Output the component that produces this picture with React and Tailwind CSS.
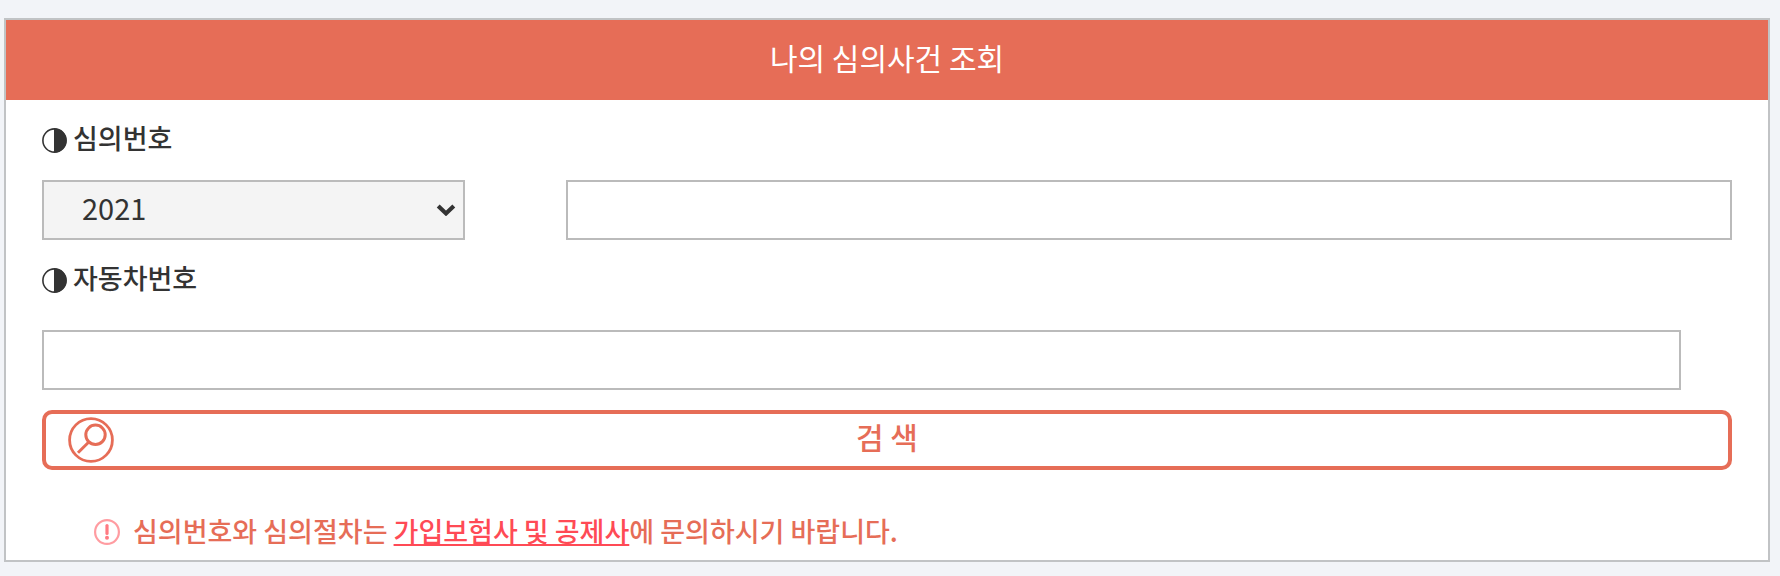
import { useState } from "react";

function HalfCircle() {
  return (
    <svg className="size-[25px] shrink-0" viewBox="0 0 25 25" aria-hidden="true">
      <circle cx="12.5" cy="12.5" r="11.6" fill="none" stroke="#333" strokeWidth="1.6" />
      <path d="M12 .5h.5a12 12 0 0 1 0 24H12z" fill="#333" />
    </svg>
  );
}

function SearchIcon() {
  return (
    <svg className="size-[46px] shrink-0" viewBox="0 0 46 46" fill="none" stroke="#e66d57" aria-hidden="true">
      <circle cx="23" cy="23" r="21.4" strokeWidth="2.8" />
      <circle cx="27.5" cy="17.8" r="9.7" strokeWidth="3" />
      <path d="M20.8 25 10 35.7" strokeWidth="3" />
    </svg>
  );
}

function AlertIcon() {
  return (
    <svg className="size-[26px] shrink-0" viewBox="0 0 26 26" fill="none" aria-hidden="true">
      <circle cx="13" cy="13" r="11.9" stroke="#ff9ca1" strokeWidth="2.2" />
      <path d="M13 6.5v8" stroke="#ff7a82" strokeWidth="3.2" strokeLinecap="round" />
      <circle cx="13" cy="18.8" r="2" fill="#ff7a82" />
    </svg>
  );
}

function FieldLabel({ htmlFor, children }) {
  return (
    <label htmlFor={htmlFor} className="flex h-10 items-center gap-[6px] text-[27px] leading-9 font-medium">
      <HalfCircle />
      <span className="pb-1">{children}</span>
    </label>
  );
}

export default function App() {
  const [year, setYear] = useState("2021");
  return (
    <div className="min-h-screen bg-[#f2f4f8] pt-[18px] pr-[10px] pb-3 pl-1 font-['Noto_Sans_CJK_KR',sans-serif] text-[#333]">
      <form className="border-2 border-[#c1c3c5] bg-white" onSubmit={(e) => e.preventDefault()}>
        <h1 className="flex h-20 items-center justify-center bg-[#e66d57] pb-1.5 text-[30px] leading-10 font-normal text-white">
          나의 심의사건 조회
        </h1>
        <div className="px-9 pt-5 pb-2">
          <FieldLabel htmlFor="case-number">심의번호</FieldLabel>
          <div className="mt-5 flex justify-between">
            <div className="relative h-[60px] w-1/4">
              <select
                aria-label="연도"
                value={year}
                onChange={(e) => setYear(e.target.value)}
                className="block h-[60px] w-full appearance-none rounded-none border-2 border-[#bbb] bg-[#f4f4f4] pr-10 pb-1.5 pl-[38px] text-[29px] leading-10"
              >
                <option>2021</option>
                <option>2020</option>
                <option>2019</option>
              </select>
              <svg
                className="pointer-events-none absolute top-6 right-[9px] h-3 w-5"
                viewBox="0 0 20 12"
                fill="none"
                stroke="#333"
                strokeWidth="4.2"
                aria-hidden="true"
              >
                <path d="m2.2 2 7.8 7.4L17.8 2" />
              </svg>
            </div>
            <input id="case-number" type="text" className="block h-[60px] w-[69%] border-2 border-[#bbb] bg-white px-4 text-[27px]" />
          </div>
          <div className="mt-5">
            <FieldLabel htmlFor="car-number">자동차번호</FieldLabel>
          </div>
          <input id="car-number" type="text" className="mt-[30px] block h-[60px] w-[97%] border-2 border-[#bbb] bg-white px-4 text-[27px]" />
          <button
            type="submit"
            className="mt-5 grid h-[60px] w-full grid-cols-[1fr_auto_1fr] items-center rounded-[10px] border-4 border-[#e66d57] bg-white px-[22px] text-[30px] leading-10 font-medium text-[#e66d57]"
          >
            <SearchIcon />
            <span className="pb-2">검 색</span>
          </button>
          <p className="mt-[42px] flex h-10 items-center gap-[13px] pl-[52px] text-[27px] leading-10 font-medium text-[#e66d57]">
            <AlertIcon />
            <span className="pb-0.5">
              심의번호와 심의절차는{" "}
              <a href="#contact" className="text-[#ff4a55] underline decoration-2 underline-offset-2">
                가입보험사 및 공제사
              </a>
              에 문의하시기 바랍니다.
            </span>
          </p>
        </div>
      </form>
    </div>
  );
}
